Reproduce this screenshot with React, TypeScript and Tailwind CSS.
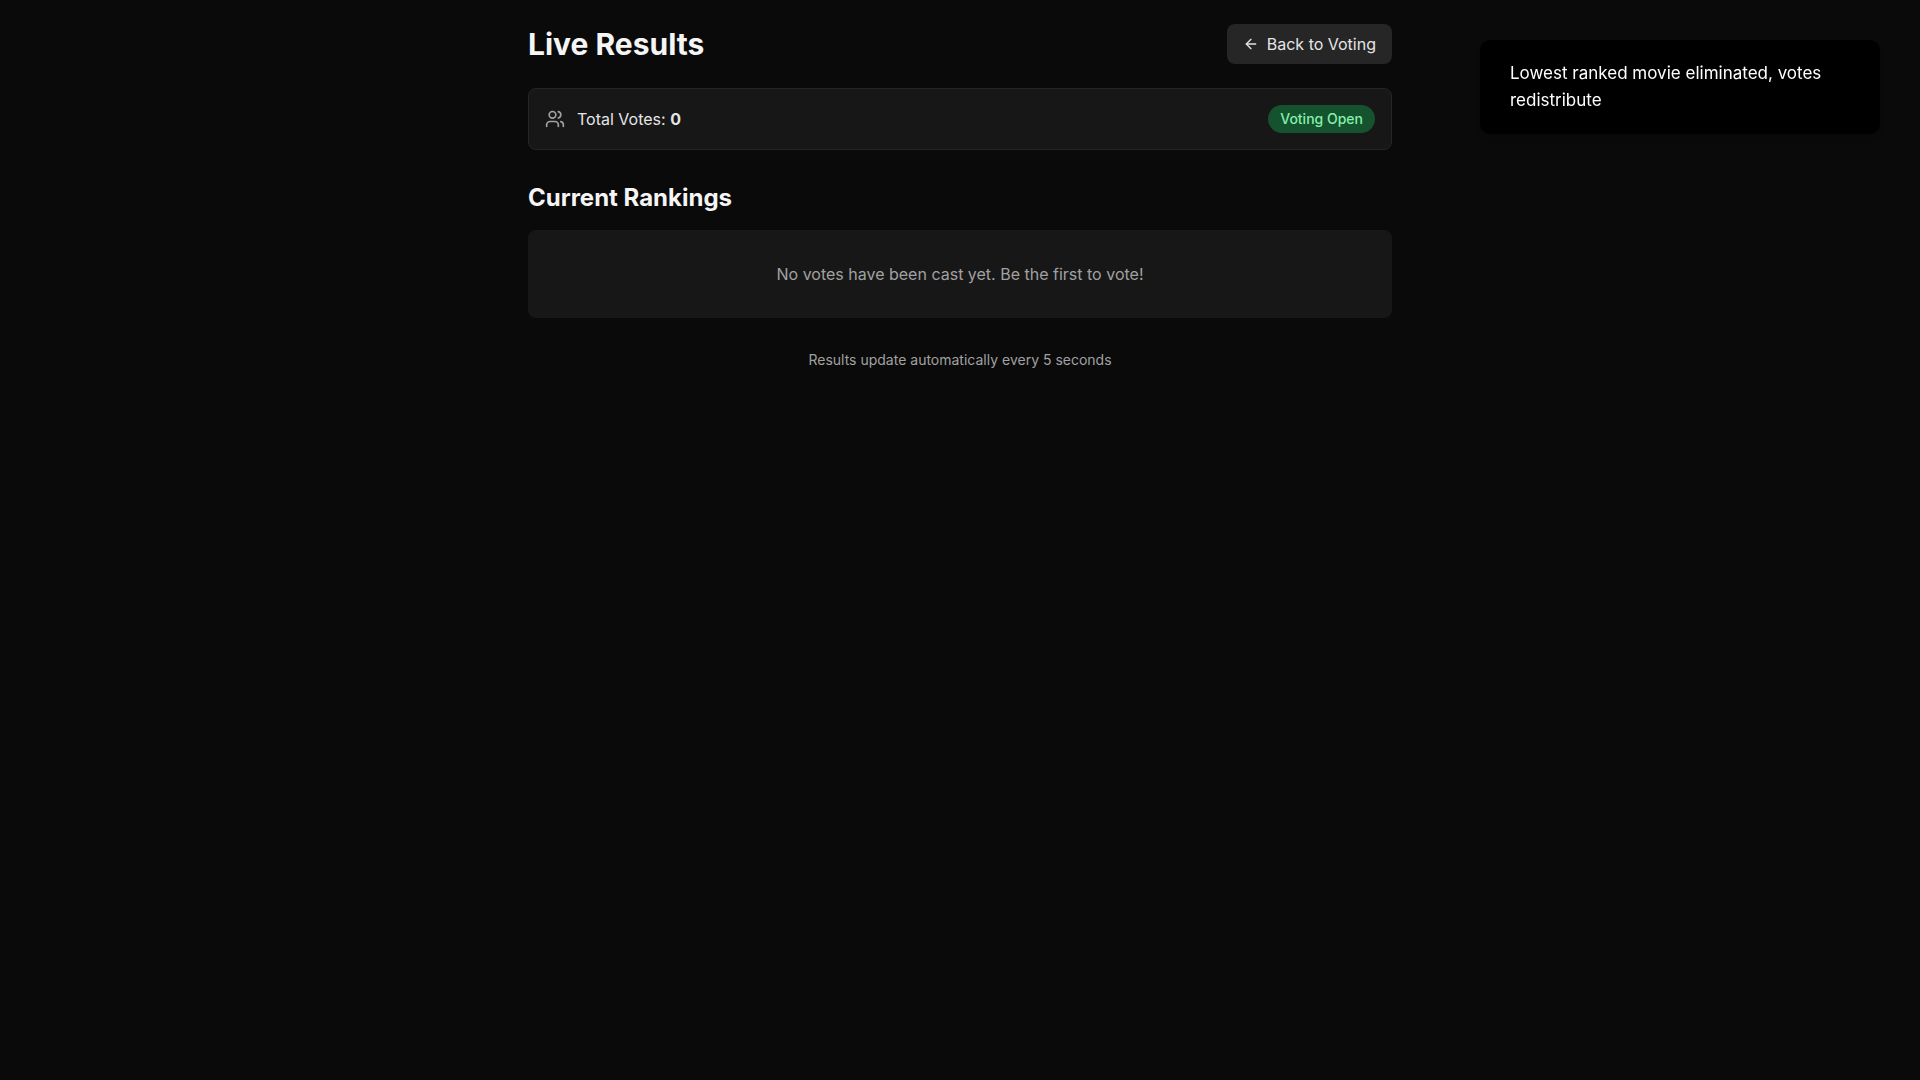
import { ArrowLeft, Users } from "lucide-react";

export default function App() {
  return (
    <div className="min-h-screen bg-[#0a0a0a] font-[Inter,sans-serif] text-neutral-100">
      <main className="mx-auto max-w-4xl px-4 py-6">
        <header className="mb-6 flex items-center justify-between">
          <h1 className="text-3xl font-bold text-neutral-100">Live Results</h1>
          <a
            href="#vote"
            className="flex items-center gap-2 rounded-lg bg-neutral-800 px-4 py-2 text-base text-neutral-200"
          >
            <ArrowLeft size={16} />
            Back to Voting
          </a>
        </header>

        <section className="mb-8 flex items-center justify-between rounded-lg border border-neutral-800 bg-neutral-900 p-4">
          <div className="flex items-center gap-3">
            <Users size={20} className="text-neutral-400" />
            <p className="text-base text-neutral-200">
              Total Votes: <strong className="font-bold">0</strong>
            </p>
          </div>
          <span className="rounded-full bg-[#14532d] px-3 py-1 text-sm font-medium text-[#86efac]">
            Voting Open
          </span>
        </section>

        <section>
          <h2 className="mb-4 text-2xl font-bold text-neutral-100">Current Rankings</h2>
          <p className="rounded-lg bg-neutral-900 p-8 text-center text-base text-neutral-400">
            No votes have been cast yet. Be the first to vote!
          </p>
        </section>

        <p className="mt-8 text-center text-sm text-neutral-400">
          Results update automatically every 5 seconds
        </p>
      </main>

      <aside
        role="status"
        className="fixed top-10 right-10 w-[400px] rounded-[10px] bg-black px-[30px] py-5 text-[17px] leading-[27px] text-white shadow-md"
      >
        Lowest ranked movie eliminated, votes redistribute
      </aside>
    </div>
  );
}
